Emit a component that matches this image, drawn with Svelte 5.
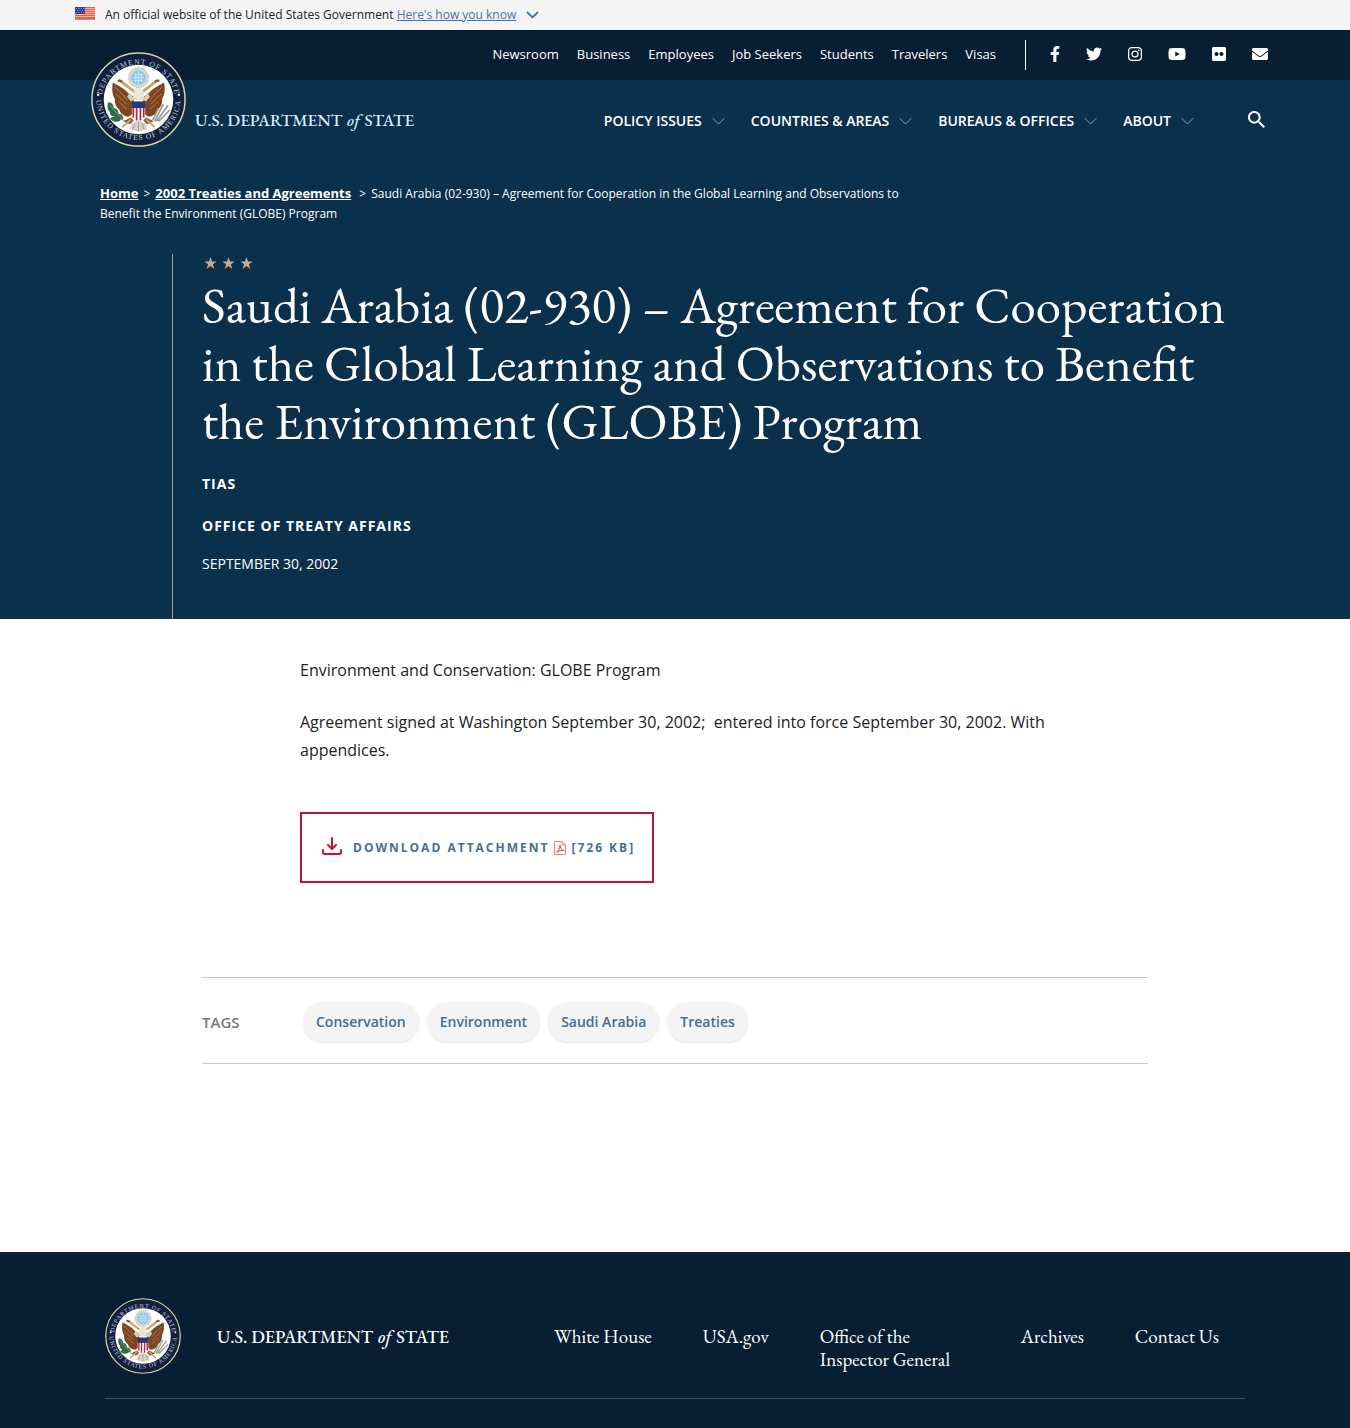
<script>
  const topLinks = ['Newsroom', 'Business', 'Employees', 'Job Seekers', 'Students', 'Travelers', 'Visas'];
  const mainLinks = ['Policy Issues', 'Countries & Areas', 'Bureaus & Offices', 'About'];
  const tags = ['Conservation', 'Environment', 'Saudi Arabia', 'Treaties'];
  const footerLinks = ['White House', 'USA.gov', 'Office of the Inspector General', 'Archives', 'Contact Us'];
  const social = [
    { name: 'Facebook', w: 10, box: '0 0 320 512', d: 'M279.14 288l14.22-92.66h-88.91v-60.13c0-25.35 12.42-50.06 52.24-50.06h40.42V6.26S260.43 0 225.36 0c-73.22 0-121.08 44.38-121.08 124.72v70.62H22.89V288h81.39v224h100.17V288z' },
    { name: 'Twitter', w: 16, box: '0 0 512 512', d: 'M459.37 151.716c.325 4.548.325 9.097.325 13.645 0 138.72-105.583 298.558-298.558 298.558-59.452 0-114.68-17.219-161.137-47.106 8.447.974 16.568 1.299 25.34 1.299 49.055 0 94.213-16.568 130.274-44.832-46.132-.975-84.792-31.188-98.112-72.772 6.498.974 12.995 1.624 19.818 1.624 9.421 0 18.843-1.3 27.614-3.573-48.081-9.747-84.143-51.98-84.143-102.985v-1.299c13.969 7.797 30.214 12.67 47.431 13.319-28.264-18.843-46.781-51.005-46.781-87.391 0-19.492 5.197-37.36 14.294-52.954 51.655 63.675 129.3 105.258 216.365 109.807-1.624-7.797-2.599-15.918-2.599-24.04 0-57.828 46.782-104.934 104.934-104.934 30.213 0 57.502 12.67 76.67 33.137 23.715-4.548 46.456-13.32 66.599-25.34-7.798 24.366-24.366 44.833-46.132 57.827 21.117-2.273 41.584-8.122 60.426-16.243-14.292 20.791-32.161 39.308-52.628 54.253z' },
    { name: 'Instagram', w: 14, box: '0 0 448 512', d: 'M130 32h188a130 130 0 0 1 130 130v188a130 130 0 0 1-130 130H130A130 130 0 0 1 0 350V162A130 130 0 0 1 130 32zm4 40a94 94 0 0 0-94 94v180a94 94 0 0 0 94 94h180a94 94 0 0 0 94-94V166a94 94 0 0 0-94-94zM224 141a115 115 0 1 1 0 230 115 115 0 0 1 0-230zm0 40a75 75 0 1 0 0 150 75 75 0 0 0 0-150zM344 109a27 27 0 1 1 0 54 27 27 0 0 1 0-54z' },
    { name: 'YouTube', w: 18, box: '0 0 576 512', d: 'M549.655 124.083c-6.281-23.65-24.787-42.276-48.284-48.597C458.781 64 288 64 288 64S117.22 64 74.629 75.486c-23.497 6.322-42.003 24.947-48.284 48.597-11.412 42.867-11.412 132.305-11.412 132.305s0 89.438 11.412 132.305c6.281 23.65 24.787 41.5 48.284 47.821C117.22 448 288 448 288 448s170.78 0 213.371-11.486c23.497-6.321 42.003-24.171 48.284-47.821 11.412-42.867 11.412-132.305 11.412-132.305s0-89.438-11.412-132.305zm-317.51 213.508V175.185l142.739 81.205-142.739 81.201z' },
    { name: 'Flickr', w: 14, box: '0 0 448 512', d: 'M400 32H48C21.5 32 0 53.5 0 80v352c0 26.5 21.5 48 48 48h352c26.5 0 48-21.5 48-48V80c0-26.5-21.5-48-48-48zM144.5 319c-35.1 0-63.5-28.4-63.5-63.5s28.4-63.5 63.5-63.5 63.5 28.4 63.5 63.5-28.4 63.5-63.5 63.5zm159 0c-35.1 0-63.5-28.4-63.5-63.5s28.4-63.5 63.5-63.5 63.5 28.4 63.5 63.5-28.4 63.5-63.5 63.5z' },
    { name: 'Email', w: 16, box: '0 0 512 512', d: 'M502.3 190.8c3.9-3.1 9.7-.2 9.7 4.7V400c0 26.5-21.5 48-48 48H48c-26.5 0-48-21.5-48-48V195.6c0-5 5.7-7.8 9.7-4.7 22.4 17.4 52.1 39.5 154.1 113.6 21.1 15.4 56.7 47.8 92.2 47.6 35.7.3 72-32.8 92.3-47.6 102-74.1 131.6-96.3 154-113.7zM256 320c23.2.4 56.6-29.2 73.4-41.4 132.7-96.3 142.8-104.7 173.4-128.7 5.8-4.5 9.2-11.5 9.2-18.9v-19c0-26.5-21.5-48-48-48H48c-26.5 0-48 21.5-48 48v19c0 7.4 3.4 14.3 9.2 18.9 30.6 23.9 40.7 32.4 173.4 128.7 16.8 12.2 50.2 41.8 73.4 41.4z' }
  ];
</script>

{#snippet seal(id)}
  <svg class="seal" viewBox="0 0 100 100" role="img" aria-label="Department of State seal">
    <defs>
      <path id="{id}-top" d="M11 52a39 39 0 0 1 78 0" />
      <path id="{id}-low" d="M5.4 48a44.6 44.6 0 0 0 89.2 0" />
    </defs>
    <circle cx="50" cy="50" r="49" fill="#10203f" stroke="#d9d3a0" stroke-width="1.6" />
    <circle cx="50" cy="50" r="36.6" fill="#fff" />
    <g fill="#c3cbd8" font-family="Liberation Serif, serif" font-size="8" letter-spacing="1" text-anchor="middle">
      <text><textPath href="#{id}-top" startOffset="50%">DEPARTMENT OF STATE</textPath></text>
      <text><textPath href="#{id}-low" startOffset="50%">UNITED STATES OF AMERICA</textPath></text>
    </g>
    <circle cx="7.5" cy="45" r="1.3" fill="#e4e8ee" />
    <circle cx="92.5" cy="45" r="1.3" fill="#e4e8ee" />
    <circle cx="50" cy="27" r="10.6" fill="#d5d9d6" stroke="#b4b8a8" stroke-width="1" stroke-dasharray="1.5 1" />
    <circle cx="50" cy="27" r="7.6" fill="#8cc5e8" />
    <path d="M45 24h10M44 27h12M45 30h10M47 22v10M50 20v14M53 22v10" stroke="#d9eefa" stroke-width=".8" />
    <path d="M29 29l17 13M71 29L54 42" stroke="#c7a762" stroke-width="3" />
    <path d="M28 30l5 1M72 30l-5 1" stroke="#7b5a2b" stroke-width="2" />
    <path d="M23 32c5 3 12 6 17 12l5 3v17l-5 4c-5 0-9-3-10-7-4-3-5-7-5-12-3-5-3-11-2-17z" fill="#7d4522" />
    <path d="M77 32c-5 3-12 6-17 12l-5 3v17l5 4c5 0 9-3 10-7 4-3 5-7 5-12 3-5 3-11 2-17z" fill="#7d4522" />
    <path d="M25 37c5 4 9 8 13 14M26 44c4 3 7 7 11 11M29 52c3 3 5 5 9 8M75 37c-5 4-9 8-13 14M74 44c-4 3-7 7-11 11M71 52c-3 3-5 5-9 8" fill="none" stroke="#b98250" stroke-width="1" />
    <path d="M45 41c2-4 8-4 10 0l1 7c-2 4-10 4-12 0z" fill="#ece6d4" />
    <path d="M41 42c1 4 3 6 7 7l-6 3-4-5zM59 42c-1 4-3 6-7 7l6 3 4-5z" fill="#d8cfb4" />
    <path d="M43 53h14v12c0 4-4 6-7 8-3-2-7-4-7-8z" fill="#fff" />
    <path d="M44.5 57v12M48 57v15M52 57v15M55.5 57v12" stroke="#ad2740" stroke-width="1.8" />
    <path d="M42.6 52h14.800v7H42.6z" fill="#263b72" />
    <path d="M42 69l-8 4 7 3 4-4zM58 69l8 4-7 3-4-4z" fill="#8a5a2c" />
    <path d="M42 71l-9 8M58 71l9 8" stroke="#c7a762" stroke-width="2" />
    <path d="M43 75l7-3 7 3 2 6-9 3-9-3z" fill="#d6d1ca" />
    <path d="M46 75l-2 7M50 74v9M54 75l2 7" stroke="#998e84" stroke-width=".8" />
    <path d="M18 53c4 0 6 3 6 6 3 0 5 3 5 6 4 0 5 3 5 6-5 1-8-1-9-3-4 0-6-3-5-5-3-2-3-6-2-10zM20 70c3-3 8-2 11 2-4 2-8 2-11-2z" fill="#2e6b48" />
    <path d="M20 56l15 17" stroke="#86a86c" stroke-width="1" />
    <path d="M67 73l9-18M69 73l12-17M71 73l12-12M65 72l6-13" stroke="#9a9d9c" stroke-width="1.8" />
  </svg>
{/snippet}

{#snippet wordmark()}
  U.S. DEPARTMENT <em>of</em> STATE
{/snippet}

<div class="banner">
  <div class="banner-inner">
    <svg class="flag" viewBox="0 0 20 13" aria-hidden="true">
      <path fill="#fff" d="M0 0h20v13H0z" />
      <path stroke="#e0604e" stroke-width="1.3" d="M0 .5h20M0 2.5h20M0 4.5h20M0 6.5h20M0 8.5h20M0 10.5h20M0 12h20" />
      <path fill="#2f3f99" d="M0 0h10v7H0z" />
      <path stroke="#8e9ad0" stroke-dasharray="1 1.5" d="M1 1.5h9M2 3.5h8M1 5.5h9" />
    </svg>
    <span>An official website of the United States Government <a href="#how">Here's how you know</a></span>
    <svg class="chev" viewBox="0 0 13 8" aria-hidden="true"><path d="M1 1l5.500 5.500L12 1" fill="none" stroke="#4773aa" stroke-width="1.8" /></svg>
  </div>
</div>

<header>
  <div class="header-inner">
    <a class="brand" href="#home">
      {@render seal('head')}
      <span class="mark">{@render wordmark()}</span>
    </a>
    <div class="navs">
      <div class="top-row">
        <nav class="top-nav" aria-label="Audiences">
          {#each topLinks as l}<a href="#top">{l}</a>{/each}
        </nav>
        <div class="social">
          {#each social as s}
            <a href="#social" aria-label={s.name}>
              <svg width={s.w} height="16" viewBox={s.box} fill="#fff"><path fill-rule="evenodd" d={s.d} /></svg>
            </a>
          {/each}
        </div>
      </div>
      <div class="main-row">
        <nav class="main-nav" aria-label="Main">
          {#each mainLinks as l}
            <button type="button">
              {l}
              <svg class="chev" viewBox="0 0 13 8" aria-hidden="true"><path d="M.5 1l6 6 6-6" fill="none" stroke="#7f9db8" /></svg>
            </button>
          {/each}
        </nav>
        <button class="search" type="button" aria-label="Search">
          <svg width="17" height="17" viewBox="3 3 17.5 17.5" fill="#fff"><path d="M15.5 14h-.79l-.28-.27C15.41 12.59 16 11.11 16 9.5 16 5.91 13.09 3 9.5 3S3 5.91 3 9.5 5.91 16 9.5 16c1.61 0 3.09-.59 4.23-1.57l.27.28v.79l5 4.99L20.49 19l-4.99-5zm-6 0C7.01 14 5 11.99 5 9.5S7.01 5 9.5 5 14 7.01 14 9.5 11.99 14 9.5 14z" /></svg>
        </button>
      </div>
    </div>
  </div>
</header>

<section class="hero">
  <nav class="crumbs" aria-label="Breadcrumb">
    <p><a href="#home">Home</a><i>&gt;</i><a href="#treaties">2002 Treaties and Agreements</a> <i>&gt;</i>Saudi Arabia (02-930) – Agreement for Cooperation in the Global Learning and Observations to Benefit the Environment (GLOBE) Program</p>
  </nav>
  <div class="hero-inner">
    <div class="title">
      <svg class="stars" width="50" height="12" viewBox="0 0 50 12" fill="#c9a98b" aria-hidden="true">
        {#each [0, 18, 36] as x}
          <path transform="translate({x})" d="M6.5 0l1.5 4.5h4.7L8.9 7.3l1.5 4.6-3.9-2.9-3.9 2.9 1.5-4.6L.3 4.5H5z" />
        {/each}
      </svg>
      <h1>Saudi Arabia (02-930) – Agreement for Cooperation in the Global Learning and Observations to Benefit the Environment (GLOBE) Program</h1>
      <p class="kicker">TIAS</p>
      <p class="kicker">Office of Treaty Affairs</p>
      <p class="date">September 30, 2002</p>
    </div>
  </div>
</section>

<main>
  <article>
    <p>Environment and Conservation: GLOBE Program</p>
    <p>Agreement signed at Washington September 30, 2002;&nbsp; entered into force September 30, 2002. With appendices.</p>
    <a class="download" href="#download">
      <svg class="dl" width="20" height="18" viewBox="0 0 20 18" fill="none" stroke="#c41230" stroke-width="2" stroke-linecap="round" stroke-linejoin="round" aria-hidden="true"><path d="M10 1v11M6 8l4 4 4-4M1 13v2q0 2 2 2h14q2 0 2-2v-2" /></svg>
      <span>Download Attachment</span>
      <svg class="pdf" width="12" height="14" viewBox="0 0 12 14" fill="none" stroke="#d98a70" aria-hidden="true"><path d="M.5.5h7.500l3.500 3.500v9.500H.5zM8 .5V4h3.500" /><path d="M2.500 11.500c2-1 3.500-4.500 3.500-7.500 0 3 1.500 5 4 5.500-2.500-.6-5 .3-7.500 2z" stroke="#c9493a" /></svg>
      <span>[726 KB]</span>
    </a>
  </article>
  <section class="tags" aria-label="Tags">
    <h2>Tags</h2>
    <ul>
      {#each tags as t}<li><a href="#tag">{t}</a></li>{/each}
    </ul>
  </section>
</main>

<footer>
  <div class="footer-inner">
    <a class="brand" href="#home">
      {@render seal('foot')}
      <span class="mark">{@render wordmark()}</span>
    </a>
    <nav aria-label="Footer">
      {#each footerLinks as l}<a href="#foot">{l}</a>{/each}
    </nav>
  </div>
</footer>

<style>
  :global(body) {
    margin: 0;
    background: #fff;
    color: #222;
    font-family: 'Open Sans', sans-serif;
  }
  a { color: inherit; text-decoration: none; }
  p, h1, h2, ul { margin: 0; padding: 0; }
  svg { display: block; flex: none; }
  button { border: 0; padding: 0; background: none; color: inherit; font: inherit; cursor: pointer; }

  .banner { background: #f4f4f4; font-size: 12px; line-height: 30px; }
  .banner-inner { max-width: 1200px; margin: 0 auto; display: flex; align-items: center; }
  .banner a { color: #4773aa; text-decoration: underline; }
  .flag { width: 20px; height: 13px; margin: 0 10px 4px 0; }
  .chev { width: 13px; height: 8px; margin-left: 10px; }

  header { background: linear-gradient(#081f33 50px, #0b304c 50px); color: #fff; }
  .header-inner { max-width: 1186px; margin: 0 auto; display: flex; justify-content: space-between; }
  .brand { display: flex; align-items: center; }
  header .brand { align-items: flex-start; gap: 9px; padding: 22px 0 0 9px; }
  header .seal { width: 95px; height: 95px; }
  .mark { font-family: 'EB Garamond', 'Liberation Serif', serif; font-weight: 500; white-space: nowrap; }
  .mark em { margin: 0 1px; }
  header .mark { font-size: 17px; line-height: 20px; padding-top: 58px; color: #dcecf8; }
  .top-row { display: flex; height: 50px; align-items: center; justify-content: flex-end; }
  .top-nav { display: flex; gap: 18px; font-size: 13px; line-height: 20px; padding-bottom: 2px; }
  .social { display: flex; align-items: center; gap: 26px; height: 30px; margin-left: 29px; padding-left: 24px; border-left: 1px solid #fff; }
  .social svg { margin-bottom: 2px; }
  .main-row { display: flex; height: 80px; align-items: center; justify-content: flex-end; }
  .main-nav { display: flex; gap: 26px; padding-top: 2px; }
  .main-nav button { display: flex; align-items: center; font-size: 14px; line-height: 20px; font-weight: 600; text-transform: uppercase; white-space: nowrap; }
  .search { margin: 0 3px 2px 54px; }

  .hero { background: #0b304c; color: #fff; padding-top: 24px; }
  .crumbs { max-width: 1150px; margin: 0 auto; font-size: 12px; line-height: 20px; }
  .crumbs p { max-width: 820px; }
  .crumbs a { font-size: 13px; line-height: 18px; font-weight: 700; text-decoration: underline; }
  .crumbs i { font-style: normal; margin: 0 5px; }
  .hero-inner { max-width: 1140px; margin: 0 auto; padding: 30px 0 0 67px; box-sizing: border-box; }
  .title { border-left: 1px solid #9c9a92; padding: 3px 0 45px 29px; }
  .stars { margin-left: 2px; }
  h1 { margin: 7px 0 24px; font-family: 'EB Garamond', 'Liberation Serif', serif; font-weight: 400; font-size: 51px; line-height: 58px; }
  .kicker { margin-bottom: 22px; font-size: 14px; line-height: 20px; font-weight: 700; letter-spacing: 1px; text-transform: uppercase; }
  .date { margin-top: -4px; font-size: 14px; line-height: 20px; text-transform: uppercase; }

  article { max-width: 750px; margin: 0 auto; padding-top: 37px; font-size: 16px; line-height: 28px; }
  article p { margin-bottom: 24px; }
  .download { display: inline-flex; align-items: center; margin-top: 24px; padding: 0 17px 0 20px; border: 2px solid #c41230; color: #456f9b; font-size: 12px; line-height: 67px; font-weight: 700; letter-spacing: 2px; text-transform: uppercase; }
  .dl { margin: 0 11px 4px 0; }
  .pdf { margin: 0 5px; }
  .tags { max-width: 946px; margin: 94px auto 188px; display: flex; align-items: center; border: solid #c8c8c8; border-width: 1px 0; padding: 24px 0 21px; }
  .tags h2 { width: 101px; font-size: 15px; line-height: 20px; font-weight: 600; color: #7a7a7a; text-transform: uppercase; }
  .tags ul { display: flex; flex-wrap: wrap; gap: 8px; list-style: none; }
  .tags a { display: block; padding: 0 13px; border-radius: 20px; background: #f4f4f4; color: #456d95; font-size: 14px; line-height: 40px; font-weight: 600; box-shadow: 0 1px 2px #0000001a; }

  footer { background: #081f33; color: #fff; padding: 46px 0 29px; }
  .footer-inner { max-width: 1140px; margin: 0 auto; padding-bottom: 24px; display: flex; justify-content: space-between; border-bottom: 1px solid #3d5063; }
  footer .brand { gap: 36px; }
  footer .seal { width: 76px; height: 76px; }
  footer .mark { font-size: 18px; }
  footer nav { display: flex; gap: 51px; padding: 27px 26px 0 0; font-family: 'EB Garamond', 'Liberation Serif', serif; font-size: 19px; line-height: 23px; }
  footer nav a { max-width: 150px; }
</style>
